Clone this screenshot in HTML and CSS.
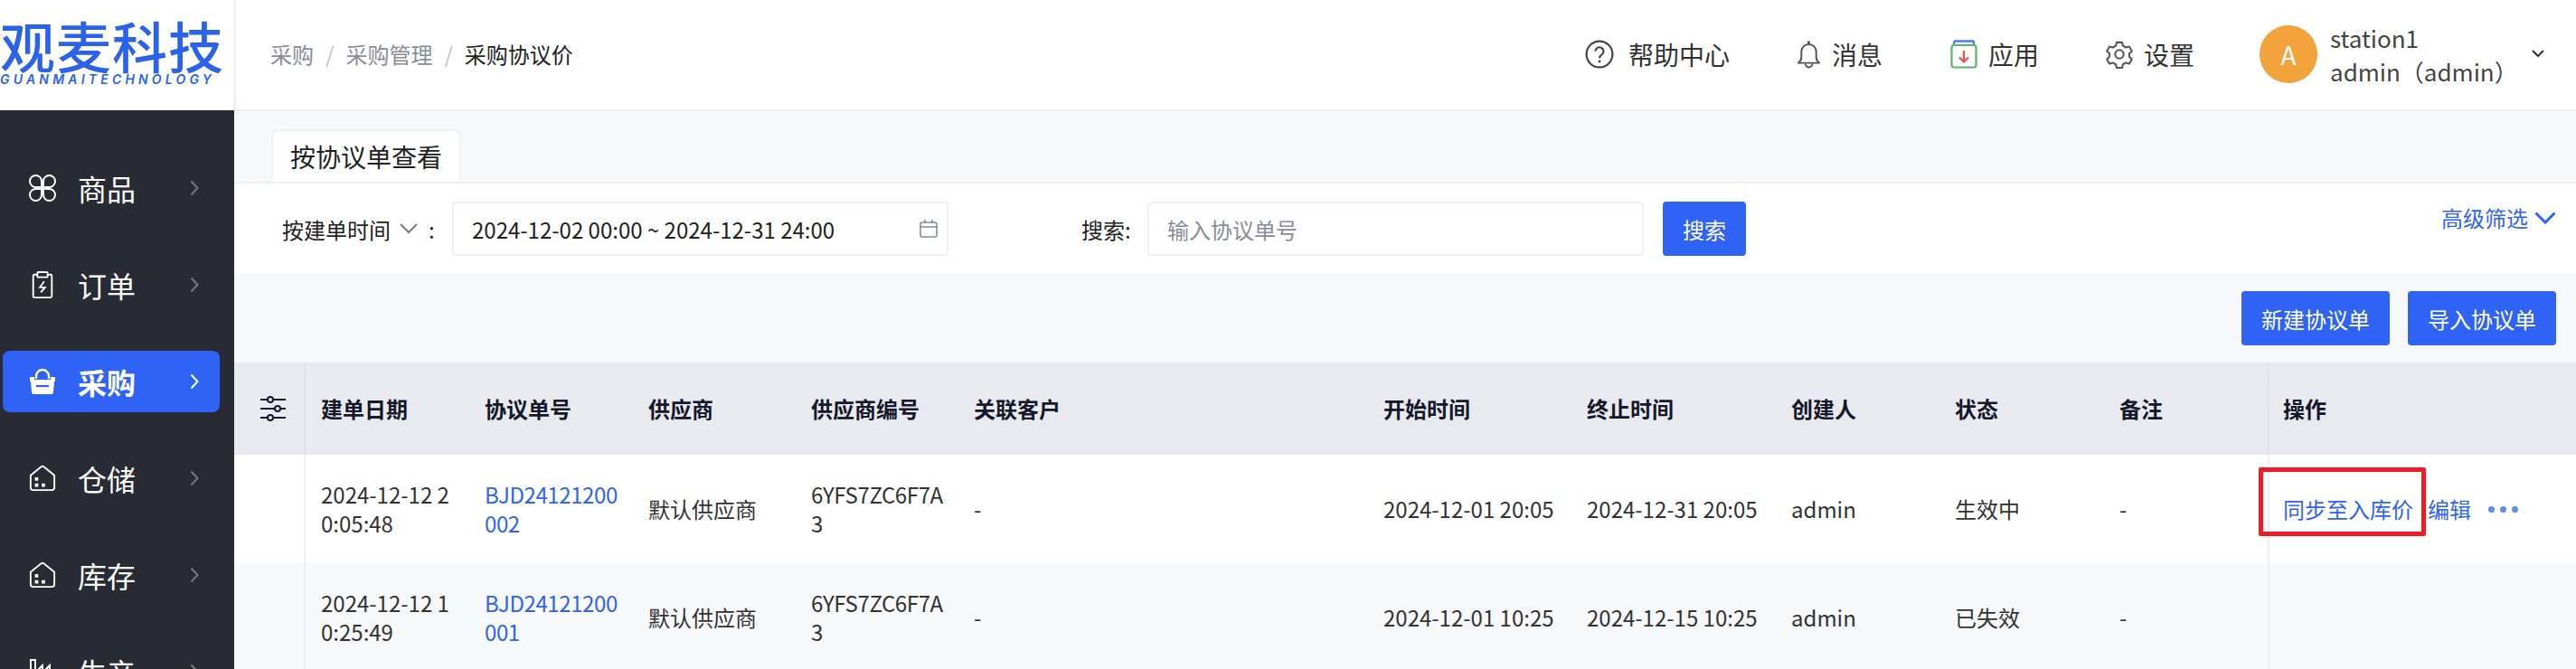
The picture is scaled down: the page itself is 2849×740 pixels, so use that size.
FILE: index.html
```html
<!DOCTYPE html>
<html lang="zh-CN">
<head>
<meta charset="utf-8">
<title>采购协议价</title>
<link rel="stylesheet" href="styles.css">
</head>
<body>
<div class="app">
  <header class="topbar">
    <div class="logo">
      <div class="logo-cn">观麦科技</div>
      <div class="logo-en">GUANMAITECHNOLOGY</div>
    </div>
    <nav class="crumbs">
      <span>采购</span><i>/</i><span>采购管理</span><i>/</i><b>采购协议价</b>
    </nav>
    <div class="tools">
      <a class="tool t-help"><svg class="ticon" viewBox="0 0 30 30"><circle cx="15" cy="15" r="13.5" fill="none" stroke="#444" stroke-width="2"/><path d="M10.8 12a4.2 4.2 0 1 1 6.6 3.4c-1.4 1-2.4 1.7-2.4 3.6" fill="none" stroke="#444" stroke-width="2"/><circle cx="15" cy="22.6" r="1.4" fill="#444"/></svg>帮助中心</a>
      <a class="tool t-bell"><svg class="ticon bell" viewBox="0 0 28 32"><path d="M2 26c2-1.6 3.5-3.5 3.5-7v-6a8.500 8.500 0 0 1 17 0v6c0 3.500 1.500 5.400 3.500 7z" fill="none" stroke="#555" stroke-width="2" stroke-linejoin="round"/><path d="M14 1v3" stroke="#555" stroke-width="3"/><path d="M10 27a4 4 0 0 0 8 0" fill="none" stroke="#555" stroke-width="2"/></svg>消息</a>
      <a class="tool t-app"><svg class="ticon" viewBox="0 0 30 32"><path d="M4 6V3.500a2 2 0 0 1 2-2h18a2 2 0 0 1 2 2V6" fill="none" stroke="#4a7df0" stroke-width="2.500"/><rect x="1.500" y="6" width="27" height="24.500" rx="2.500" fill="#fff" stroke="#5cb568" stroke-width="2.200"/><path d="M15 12v12M10 19.500l5 5 5-5" fill="none" stroke="#ee4d46" stroke-width="2.200"/></svg>应用</a>
      <a class="tool t-gear"><svg class="ticon" viewBox="0 0 32 32"><path d="M12.800 2h6.400l1 4 3.500 2 4-1.100 3 5.300-3 2.900v3.800l3 2.900-3 5.300-4-1.100-3.500 2-1 4h-6.400l-1-4-3.500-2-4 1.100-3-5.300 3-2.900v-3.800l-3-2.900 3-5.300 4 1.100 3.500-2z" fill="none" stroke="#555" stroke-width="2.200" stroke-linejoin="round"/><circle cx="16" cy="16" r="5" fill="none" stroke="#555" stroke-width="2.200"/></svg>设置</a>
      <div class="user">
        <div class="avatar">A</div>
        <div class="user-text"><div>station1</div><div>admin（admin）</div></div>
        <svg class="user-caret" viewBox="0 0 14 9"><path d="M1 1l6 6 6-6" fill="none" stroke="#333" stroke-width="2"/></svg>
      </div>
    </div>
  </header>
  <div class="body">
    <aside class="side">
      <a class="nav"><svg class="nicon" viewBox="0 0 30 30"><path d="M14 14H7.500A6.500 6.500 0 1 1 14 7.500ZM16 14V7.500A6.500 6.500 0 1 1 22.500 14ZM14 16V22.500A6.500 6.500 0 1 1 7.500 16ZM16 16H22.500A6.500 6.500 0 1 1 16 22.500Z" fill="none" stroke="#fff" stroke-width="2"/></svg><span>商品</span><svg class="chev" viewBox="0 0 10 18"><path d="M1.500 1.500L8.500 9l-7 7.500" fill="none" stroke="currentColor" stroke-width="2"/></svg></a>
      <a class="nav"><svg class="nicon" viewBox="0 0 30 32"><path d="M9 4H5.500A1.500 1.500 0 0 0 4 5.500v24A1.500 1.500 0 0 0 5.500 31h19a1.500 1.500 0 0 0 1.500-1.500v-24A1.500 1.500 0 0 0 24.500 4H21" fill="none" stroke="#fff" stroke-width="2"/><rect x="9" y="1" width="12" height="6" rx="1" fill="none" stroke="#fff" stroke-width="2"/><path d="M17 12l-5 7h6l-5 6" fill="none" stroke="#fff" stroke-width="2"/></svg><span>订单</span><svg class="chev" viewBox="0 0 10 18"><path d="M1.500 1.500L8.500 9l-7 7.500" fill="none" stroke="currentColor" stroke-width="2"/></svg></a>
      <a class="nav active"><svg class="nicon" viewBox="0 0 30 30"><path d="M8 12V9a7 7 0 0 1 14 0v3" fill="none" stroke="#fff" stroke-width="2.400"/><path d="M1 10h5v3h18v-3h5v5h-1l-1 12a2 2 0 0 1-2 2H5a2 2 0 0 1-2-2L2 15H1z" fill="#fff"/><path d="M8 20h14" stroke="#2f63f6" stroke-width="2.200"/></svg><span>采购</span><svg class="chev" viewBox="0 0 10 18"><path d="M1.500 1.500L8.500 9l-7 7.500" fill="none" stroke="currentColor" stroke-width="2"/></svg></a>
      <a class="nav"><svg class="nicon" viewBox="0 0 32 30"><path d="M2 11.500L14.500 1.500a2.500 2.500 0 0 1 3 0L30 11.500V26a3 3 0 0 1-3 3H5a3 3 0 0 1-3-3z" fill="none" stroke="#fff" stroke-width="2"/><path d="M7 14h4v4H7zM7 21h4v4H7zM15 21h4v4h-4z" fill="#fff"/></svg><span>仓储</span><svg class="chev" viewBox="0 0 10 18"><path d="M1.500 1.500L8.500 9l-7 7.500" fill="none" stroke="currentColor" stroke-width="2"/></svg></a>
      <a class="nav"><svg class="nicon" viewBox="0 0 32 30"><path d="M2 11.500L14.500 1.500a2.500 2.500 0 0 1 3 0L30 11.500V26a3 3 0 0 1-3 3H5a3 3 0 0 1-3-3z" fill="none" stroke="#fff" stroke-width="2"/><path d="M7 14h4v4H7zM7 21h4v4H7zM15 21h4v4h-4z" fill="#fff"/></svg><span>库存</span><svg class="chev" viewBox="0 0 10 18"><path d="M1.500 1.500L8.500 9l-7 7.500" fill="none" stroke="currentColor" stroke-width="2"/></svg></a>
      <a class="nav"><svg class="nicon" viewBox="0 0 30 30"><path d="M2 29V2h5v14l8-8v8l8-8v23z" fill="none" stroke="#fff" stroke-width="2"/></svg><span>生产</span><svg class="chev" viewBox="0 0 10 18"><path d="M1.500 1.500L8.500 9l-7 7.500" fill="none" stroke="currentColor" stroke-width="2"/></svg></a>
    </aside>
    <main class="main">
      <div class="tabs"><div class="tab">按协议单查看</div></div>
      <section class="filter">
        <span class="flabel">按建单时间</span>
        <svg class="fcaret" viewBox="0 0 20 12"><path d="M1 1l9 9 9-9" fill="none" stroke="#777" stroke-width="2"/></svg>
        <span class="fcolon">:</span>
        <div class="field date">2024-12-02 00:00 ~ 2024-12-31 24:00<svg class="cal" viewBox="0 0 20 20"><rect x="1" y="3" width="18" height="16" rx="2" fill="none" stroke="#858a99" stroke-width="1.600"/><path d="M1 8h18M6 0v4M14 0v4" fill="none" stroke="#858a99" stroke-width="1.600"/></svg></div>
        <span class="slabel">搜索:</span>
        <div class="field search">输入协议单号</div>
        <button class="btn sbtn">搜索</button>
        <a class="adv">高级筛选<svg viewBox="0 0 24 14"><path d="M1.500 1.500L12 12 22.500 1.500" fill="none" stroke="#2f63f6" stroke-width="3"/></svg></a>
      </section>
      <div class="actions">
        <button class="btn abtn">新建协议单</button>
        <button class="btn abtn">导入协议单</button>
      </div>
      <section class="table">
        <div class="row head">
          <div class="cell set"><svg viewBox="0 0 28 28"><path d="M0 4h8M14 4h14M0 14h16M22 14h6M0 24h8M14 24h14" stroke="#15182a" stroke-width="2"/><circle cx="11" cy="4" r="3" fill="none" stroke="#15182a" stroke-width="2"/><circle cx="19" cy="14" r="3" fill="none" stroke="#15182a" stroke-width="2"/><circle cx="11" cy="24" r="3" fill="none" stroke="#15182a" stroke-width="2"/></svg></div>
          <div class="cell">建单日期</div><div class="cell">协议单号</div><div class="cell">供应商</div><div class="cell">供应商编号</div><div class="cell">关联客户</div><div class="cell">开始时间</div><div class="cell">终止时间</div><div class="cell">创建人</div><div class="cell">状态</div><div class="cell">备注</div><div class="cell ops">操作</div>
        </div>
        <div class="row">
          <div class="cell set"></div>
          <div class="cell">2024-12-12 20:05:48</div><div class="cell"><a class="link code">BJD24121200002</a></div><div class="cell">默认供应商</div><div class="cell code">6YFS7ZC6F7A3</div><div class="cell">-</div><div class="cell">2024-12-01 20:05</div><div class="cell">2024-12-31 20:05</div><div class="cell">admin</div><div class="cell">生效中</div><div class="cell">-</div>
          <div class="cell ops"><a class="link">同步至入库价</a><a class="link">编辑</a><span class="dots"><i></i><i></i><i></i></span><span class="mark"></span></div>
        </div>
        <div class="row alt">
          <div class="cell set"></div>
          <div class="cell">2024-12-12 10:25:49</div><div class="cell"><a class="link code">BJD24121200001</a></div><div class="cell">默认供应商</div><div class="cell code">6YFS7ZC6F7A3</div><div class="cell">-</div><div class="cell">2024-12-01 10:25</div><div class="cell">2024-12-15 10:25</div><div class="cell">admin</div><div class="cell">已失效</div><div class="cell">-</div>
          <div class="cell ops"></div>
        </div>
      </section>
    </main>
  </div>
</div>
</body>
</html>
```
FILE: styles.css
```css
* { box-sizing: border-box; }
html, body { margin: 0; height: 100%; overflow: hidden; }
body { font-family: "Noto Sans CJK SC", sans-serif; font-size: 24px; color: #333; background: #f7f8fa; }
.app { height: 740px; overflow: hidden; display: flex; flex-direction: column; }

.topbar { height: 123px; flex: none; display: flex; align-items: center; background: #fff; border-bottom: 2px solid #eef0f4; }
.logo { width: 261px; height: 100%; border-right: 3px solid #eef0f4; padding-top: 20px; color: #2b62ea; overflow: hidden; flex: none; white-space: nowrap; }
.logo-cn { font-size: 61px; line-height: 60px; font-weight: 500; letter-spacing: 1px; }
.logo-en { font-family: "Inter", sans-serif; font-style: italic; font-weight: 600; font-size: 14px; line-height: 12px; letter-spacing: 4.200px; margin-top: 2px; }
.crumbs { margin: 0 0 2px 38px; display: flex; align-items: center; color: #8a8d99; }
.crumbs i { font-style: normal; margin: 0 13px; color: #c0c3cc; }
.crumbs b { font-weight: 400; color: #222; }
.tools { margin: 0 0 2px auto; display: flex; align-items: center; font-size: 28px; color: #333; }
.tool { display: flex; align-items: center; }
.ticon { width: 30px; height: 32px; margin-right: 12px; flex: none; }
.ticon.bell { width: 27px; }
.t-help { margin-right: 74px; }
.t-help .ticon { width: 32px; margin-right: 16px; }
.t-bell { margin-right: 75px; }
.t-app { margin-right: 74px; }
.t-gear { margin-right: 72px; }
.user { display: flex; align-items: center; padding-right: 35px; font-size: 26px; }
.avatar { width: 64px; height: 64px; border-radius: 50%; background: #f3a33b; color: #fff; display: flex; align-items: center; justify-content: center; font-size: 28px; }
.user-text { margin-left: 14px; width: 223px; line-height: 37px; color: #444; white-space: nowrap; }
.user-caret { width: 14px; height: 9px; }

.body { flex: 1; min-height: 0; display: flex; }
.side { width: 259px; flex: none; background: #282b34; padding-top: 52px; display: flex; flex-direction: column; gap: 39px; margin-top: -1px; overflow: hidden; }
.nav { flex: none; height: 68px; width: 240px; margin-left: 3px; padding: 0 23px 0 29px; border-radius: 8px; display: flex; align-items: center; color: #fff; font-size: 32px; }
.nicon { width: 30px; height: 30px; flex: none; margin-right: 24px; }
.nav span { flex: 1; }
.chev { width: 10px; height: 18px; color: #777; }
.nav.active { background: #2f63f6; font-weight: 700; }
.nav.active .chev { color: #fff; }

.main { flex: 1; min-width: 0; }
.tabs { padding: 20px 0 0 41px; border-bottom: 2px solid #eef0f4; height: 80px; }
.tab { width: 210px; height: 58px; background: #fff; border: 2px solid #eef0f4; border-bottom: 0; border-radius: 8px 8px 0 0; font-size: 28px; display: flex; align-items: center; justify-content: center; color: #222; }
.filter { height: 100px; background: #fff; display: flex; align-items: center; padding: 0 22px 0 53px; }
.flabel { color: #222; }
.fcaret { width: 20px; height: 12px; margin-left: 10px; }
.fcolon { margin-left: 12px; width: 26px; color: #222; }
.field { height: 60px; border: 2px solid #eef0f4; border-radius: 4px; display: flex; align-items: center; padding: 0 20px; background: #fff; }
.date { width: 549px; color: #222; justify-content: space-between; padding-right: 10px; }
.cal { width: 20px; height: 20px; }
.slabel { margin-left: 147px; width: 73px; color: #222; }
.search { width: 549px; color: #8a8d99; }
.btn { border: 0; background: #2f63f6; color: #fff; font: inherit; border-radius: 4px; height: 60px; padding: 0; }
.sbtn { width: 92px; margin-left: 21px; }
.adv { margin-left: auto; align-self: flex-start; margin-top: 20px; display: flex; align-items: center; gap: 7px; color: #2f63f6; }
.adv svg { width: 24px; height: 14px; }
.actions { height: 98px; display: flex; justify-content: flex-end; gap: 20px; padding: 19px 22px 0 0; }
.abtn { width: 164px; }

.row { display: grid; grid-template-columns: 79px 181px 181px 180px 180px 453px 225px 226px 181px 182px 181px 341px; height: 120px; background: #fff; }
.row.head { height: 102px; background: #e9eaef; font-weight: 700; color: #15182a; }
.row.alt { background: #f7f8fa; }
.cell { display: flex; flex-wrap: wrap; align-items: center; align-content: center; padding: 0 10px 0 17px; line-height: 32px; word-break: break-all; }
.code { letter-spacing: -0.400px; }
.cell.set { border-right: 2px solid #eef0f4; justify-content: center; padding: 0 0 0 9px; }
.set svg { width: 28px; height: 28px; }
.head .cell.set, .head .cell.ops { border-color: #e1e3ea; }
.cell.ops { border-left: 2px solid #eef0f4; position: relative; flex-wrap: nowrap; word-break: normal; white-space: nowrap; gap: 16px; padding-left: 15px; }
.link { color: #2f63f6; }
.dots { display: flex; gap: 6px; margin-left: 3px; }
.dots i { width: 7px; height: 7px; border-radius: 50%; background: #5b8fe8; }
.mark { position: absolute; left: -12px; top: 14px; width: 185px; height: 76px; border: 5px solid #ee1c25; border-radius: 2px; }
```
